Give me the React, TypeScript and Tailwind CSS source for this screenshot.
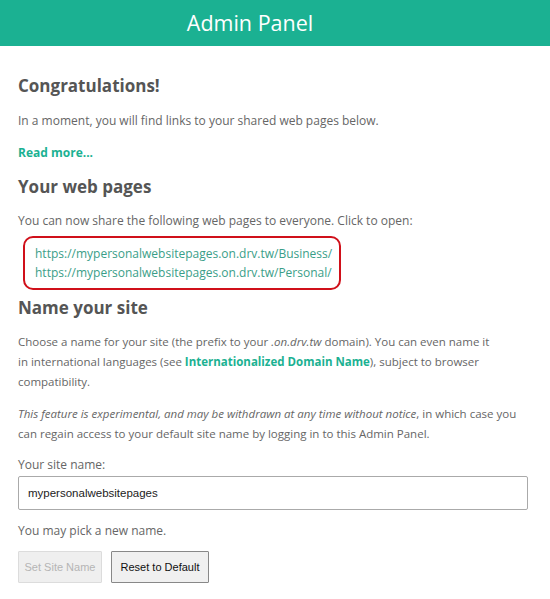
export default function App() {
  return (
    <div className="min-h-screen bg-white font-['Open_Sans',sans-serif] text-[12px] leading-[20px] text-[#666]">
      <header className="h-[46px] bg-[#1bb192] flex items-center justify-center pr-[50px]">
        <h1 className="text-[21.5px] text-white leading-none">Admin Panel</h1>
      </header>
      <main className="px-[18px] pb-6">
        <h2 className="mt-[30px] text-[17px] font-bold text-[#555] leading-[20px]">Congratulations!</h2>
        <p className="mt-[15px]">In a moment, you will find links to your shared web pages below.</p>
        <p className="mt-[12px]">
          <a href="#" className="font-bold text-[#1bb192]">Read more...</a>
        </p>
        <h2 className="mt-[14px] text-[17px] font-bold text-[#555] leading-[20px]">Your web pages</h2>
        <p className="mt-[14px]">You can now share the following web pages to everyone. Click to open:</p>
        <div className="mt-[5px] ml-[5px] w-[318px] rounded-[10px] border-2 border-[#d0101a] px-[10px] py-[6px]">
          <a href="#" className="block text-[#3a9e88] leading-[19px]">https://mypersonalwebsitepages.on.drv.tw/Business/</a>
          <a href="#" className="block text-[#3a9e88] leading-[19px]">https://mypersonalwebsitepages.on.drv.tw/Personal/</a>
        </div>
        <h2 className="mt-[8px] text-[17px] font-bold text-[#555] leading-[20px]">Name your site</h2>
        <p className="mt-[14px] pr-[30px] text-[11.5px]">
          Choose a name for your site (the prefix to your <em>.on.drv.tw</em> domain). You can even name it in
          international languages (see{" "}
          <a href="#" className="font-bold text-[#1bb192]">Internationalized Domain Name</a>), subject to browser
          compatibility.
        </p>
        <p className="mt-[12px] pr-[10px] text-[11.5px]">
          <em>This feature is experimental, and may be withdrawn at any time without notice</em>, in which case you
          can regain access to your default site name by logging in to this Admin Panel.
        </p>
        <label className="block mt-[11px]">Your site name:</label>
        <input
          type="text"
          defaultValue="mypersonalwebsitepages"
          className="mt-[1px] block w-[510px] h-[34px] border border-[#aaa] rounded-[2px] px-[9px] font-['Liberation_Sans',sans-serif] text-[11.5px] text-[#222] outline-none"
        />
        <p className="mt-[11px]">You may pick a new name.</p>
        <div className="mt-[10px] flex gap-[9px] font-['Liberation_Sans',sans-serif] text-[11px]">
          <button disabled className="h-[32px] w-[84px] border border-[#dcdcdc] bg-[#efefef] text-[#b5b5b5] rounded-[1px]">
            Set Site Name
          </button>
          <button className="h-[32px] w-[98px] border border-[#888] bg-[#f0f0f0] text-[#111] rounded-[1px]">
            Reset to Default
          </button>
        </div>
      </main>
    </div>
  );
}
